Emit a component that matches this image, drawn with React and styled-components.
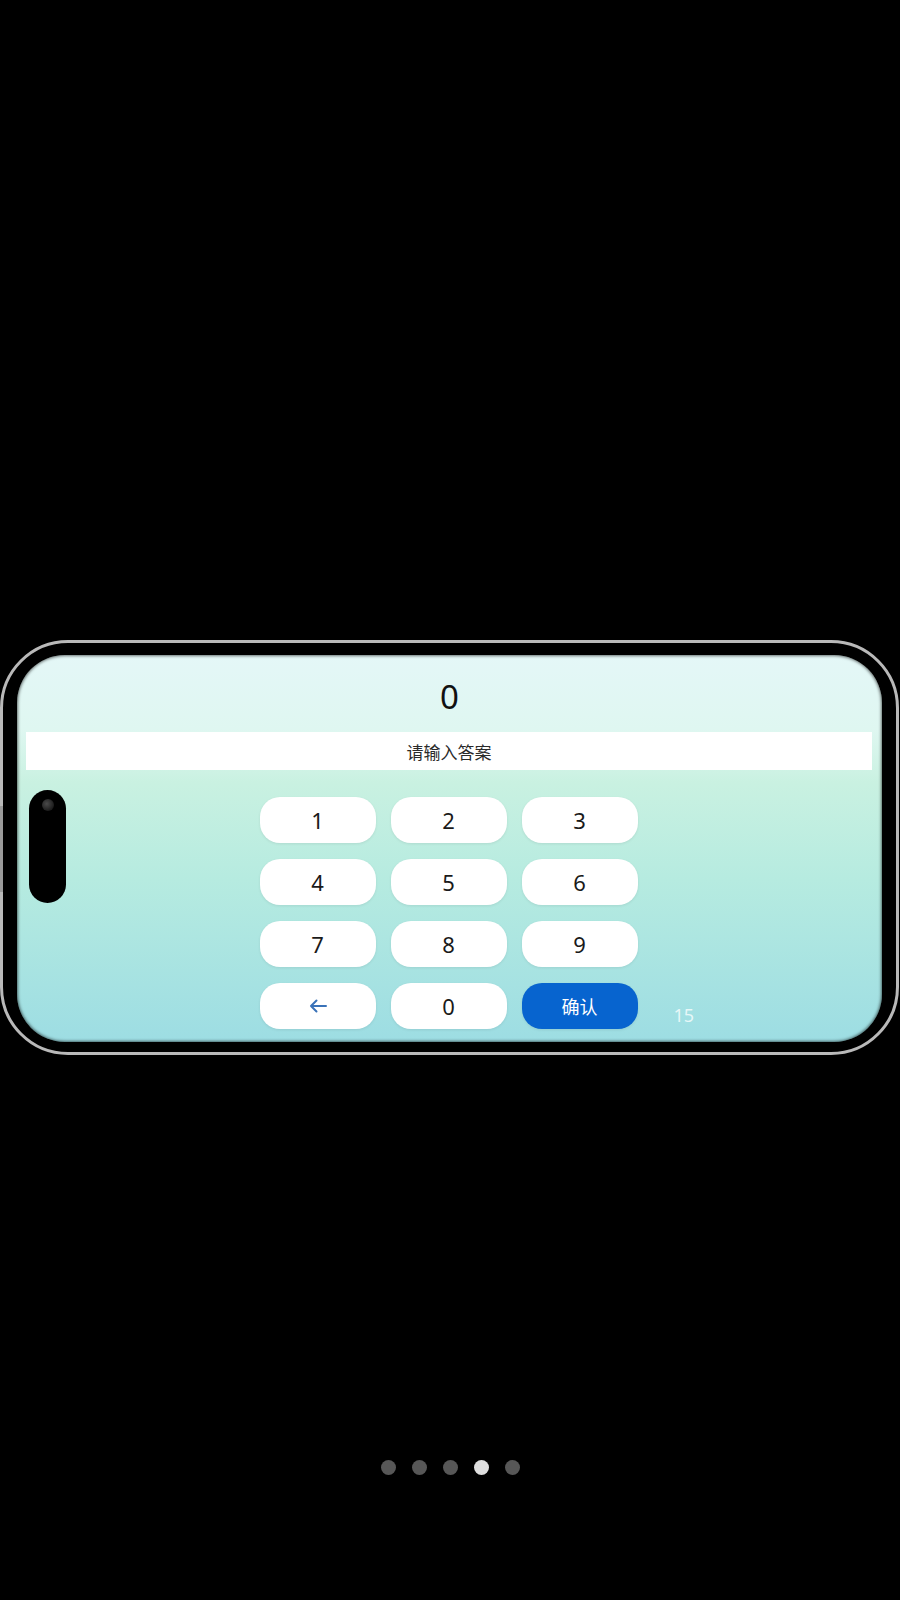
import React from 'react';
import styled, { createGlobalStyle } from 'styled-components';

const GlobalStyle = createGlobalStyle`
  html, body {
    margin: 0;
    padding: 0;
    background: #000;
  }
  body {
    font-family: "Noto Sans", "Noto Sans CJK SC", sans-serif;
  }
`;

const Page = styled.div`
  width: 900px;
  height: 1600px;
  background: #000;
  display: flex;
  flex-direction: column;
  align-items: flex-start;
  overflow: hidden;
`;

const PhoneFrame = styled.div`
  position: relative;
  box-sizing: border-box;
  width: 899px;
  height: 415px;
  margin-top: 640px;
  padding: 12px 14px 10px;
  border: 3px solid #b9b9b9;
  border-radius: 68px;
  background: #000;

  &::before {
    content: '';
    position: absolute;
    left: -4px;
    top: 163px;
    width: 4px;
    height: 86px;
    border-radius: 2px 0 0 2px;
    background: #9a9a9a;
  }
`;

const Screen = styled.div`
  position: relative;
  width: 100%;
  height: 100%;
  border-radius: 48px;
  overflow: hidden;
  display: flex;
  flex-direction: column;
  background: linear-gradient(
    to bottom,
    #e4f7f7 0%,
    #dff7f1 19%,
    #c9f1e1 33%,
    #b6ebe0 58%,
    #9ddde3 100%
  );
  box-shadow: inset 0 0 3px 1px rgba(0, 0, 0, 0.55);
`;

const CameraPill = styled.div`
  position: absolute;
  left: 12px;
  top: 135px;
  width: 37px;
  height: 113px;
  border-radius: 19px;
  background: #000;
  z-index: 2;

  &::after {
    content: '';
    position: absolute;
    left: 13px;
    top: 9px;
    width: 12px;
    height: 12px;
    border-radius: 50%;
    background: radial-gradient(circle at 40% 40%, #4a4a4a, #1c1c1c 70%);
  }
`;

const ResultArea = styled.div`
  height: 77px;
  box-sizing: border-box;
  padding-top: 6px;
  display: flex;
  align-items: center;
  justify-content: center;
  font-size: 33px;
  color: #111;
`;

const PromptBar = styled.div`
  height: 38px;
  margin: 0 10px 0 9px;
  background: #fff;
  display: flex;
  align-items: center;
  justify-content: center;
  font-family: "Noto Sans CJK SC", sans-serif;
  font-size: 17px;
  color: #2a2a2a;
`;

const KeypadArea = styled.div`
  display: flex;
  justify-content: center;
  padding: 27px 2px 0 0;
`;

const Keypad = styled.div`
  position: relative;
  display: grid;
  grid-template-columns: repeat(3, 116px);
  grid-auto-rows: 46px;
  column-gap: 15px;
  row-gap: 16px;
`;

const Key = styled.button`
  border: none;
  border-radius: 20px;
  background: ${({ primary }) => (primary ? '#0764cf' : '#fff')};
  color: ${({ primary }) => (primary ? '#fff' : '#1a1a1a')};
  font-family: ${({ primary }) =>
    primary ? '"Noto Sans CJK SC", sans-serif' : '"Noto Sans", sans-serif'};
  font-size: ${({ primary }) => (primary ? '18px' : '22px')};
  display: flex;
  align-items: center;
  justify-content: center;
  padding: 0;
  box-shadow: 0 1px 3px rgba(0, 0, 0, 0.08);
  cursor: pointer;
`;

const Timer = styled.span`
  position: absolute;
  left: calc(100% + 36px);
  bottom: 5px;
  font-size: 18px;
  line-height: 18px;
  color: rgba(255, 255, 255, 0.75);
`;

const Pager = styled.div`
  align-self: center;
  display: flex;
  gap: 16px;
  margin-top: 405px;
  padding-left: 1px;
`;

const Dot = styled.span`
  width: 15px;
  height: 15px;
  border-radius: 50%;
  background: ${({ active }) => (active ? '#dedede' : '#575757')};
`;

function BackArrow() {
  return (
    <svg width="18" height="14" viewBox="0 0 18 14" fill="none">
      <path
        d="M17 7H2M7.5 1.5L2 7l5.5 5.5"
        stroke="#3a72b8"
        strokeWidth="2"
        strokeLinecap="round"
        strokeLinejoin="round"
      />
    </svg>
  );
}

const digits = ['1', '2', '3', '4', '5', '6', '7', '8', '9'];

export default function App() {
  return (
    <Page>
      <GlobalStyle />
      <PhoneFrame>
        <Screen>
          <CameraPill />
          <ResultArea>0</ResultArea>
          <PromptBar>请输入答案</PromptBar>
          <KeypadArea>
            <Keypad>
              {digits.map((d) => (
                <Key key={d}>{d}</Key>
              ))}
              <Key aria-label="删除">
                <BackArrow />
              </Key>
              <Key>0</Key>
              <Key primary>确认</Key>
              <Timer>15</Timer>
            </Keypad>
          </KeypadArea>
        </Screen>
      </PhoneFrame>
      <Pager>
        {[0, 1, 2, 3, 4].map((i) => (
          <Dot key={i} active={i === 3} />
        ))}
      </Pager>
    </Page>
  );
}
